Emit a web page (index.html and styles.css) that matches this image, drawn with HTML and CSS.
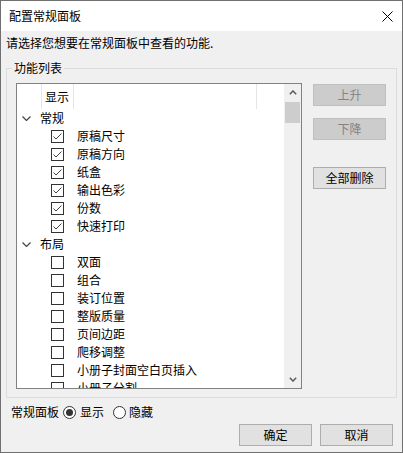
FILE: index.html
```html
<!DOCTYPE html>
<html lang="zh-CN">
<head>
    <meta charset="UTF-8">
    <title>配置常规面板</title>
    <link rel="stylesheet" href="styles.css">
</head>
<body>
<div class="window">
    <div class="titlebar">
        <span class="title">配置常规面板</span>
        <svg class="close" width="11" height="11" viewBox="0 0 11 11">
            <path d="M0.5 0.5 L10.5 10.5 M10.5 0.5 L0.5 10.5" stroke="#000" stroke-width="1" fill="none"/>
        </svg>
    </div>
    <div class="content">
        <p class="intro">请选择您想要在常规面板中查看的功能.</p>
        <fieldset class="group">
            <legend>功能列表</legend>
            <div class="group-body">
                <div class="list">
                    <div class="list-main">
                        <div class="list-header">
                            <span class="h-blank"></span>
                            <span class="h-show">显示</span>
                            <span class="h-fill"></span>
                            <span class="h-end"></span>
                        </div>

                        <div class="tree-row group-row">
                            <svg class="chevron" width="9" height="5" viewBox="0 0 9 5"><path d="M0.5 0.5 L4.5 4.5 L8.5 0.5" stroke="#444" stroke-width="1.2" fill="none"/></svg>
                            常规
                        </div>
                        <div class="tree-row item-row"><span class="cb checked"></span>原稿尺寸</div>
                        <div class="tree-row item-row"><span class="cb checked"></span>原稿方向</div>
                        <div class="tree-row item-row"><span class="cb checked"></span>纸盒</div>
                        <div class="tree-row item-row"><span class="cb checked"></span>输出色彩</div>
                        <div class="tree-row item-row"><span class="cb checked"></span>份数</div>
                        <div class="tree-row item-row"><span class="cb checked"></span>快速打印</div>

                        <div class="tree-row group-row">
                            <svg class="chevron" width="9" height="5" viewBox="0 0 9 5"><path d="M0.5 0.5 L4.5 4.5 L8.5 0.5" stroke="#444" stroke-width="1.2" fill="none"/></svg>
                            布局
                        </div>
                        <div class="tree-row item-row"><span class="cb"></span>双面</div>
                        <div class="tree-row item-row"><span class="cb"></span>组合</div>
                        <div class="tree-row item-row"><span class="cb"></span>装订位置</div>
                        <div class="tree-row item-row"><span class="cb"></span>整版质量</div>
                        <div class="tree-row item-row"><span class="cb"></span>页间边距</div>
                        <div class="tree-row item-row"><span class="cb"></span>爬移调整</div>
                        <div class="tree-row item-row"><span class="cb"></span>小册子封面空白页插入</div>
                        <div class="tree-row item-row"><span class="cb"></span>小册子分割</div>
                    </div>
                    <div class="scrollbar">
                        <div class="sb-btn">
                            <svg width="8" height="5" viewBox="0 0 8 5"><path d="M0.8 4.2 L4 1 L7.2 4.2" stroke="#606060" stroke-width="1.6" fill="none"/></svg>
                        </div>
                        <div class="sb-track"><div class="sb-thumb"></div></div>
                        <div class="sb-btn">
                            <svg width="8" height="5" viewBox="0 0 8 5"><path d="M0.8 0.8 L4 4 L7.2 0.8" stroke="#606060" stroke-width="1.6" fill="none"/></svg>
                        </div>
                    </div>
                </div>
                <div class="side-buttons">
                    <button class="btn disabled btn-up">上升</button>
                    <button class="btn disabled btn-down">下降</button>
                    <button class="btn btn-clear">全部删除</button>
                </div>
            </div>
        </fieldset>

        <div class="panel-row">
            <span class="panel-label">常规面板</span>
            <span class="radio selected"></span>
            <span class="radio-text">显示</span>
            <span class="radio"></span>
            <span class="radio-text last">隐藏</span>
        </div>

        <div class="footer">
            <button class="btn">确定</button>
            <button class="btn">取消</button>
        </div>
    </div>
</div>
</body>
</html>
```

FILE: styles.css
```css
body {
    margin: 0;
    font-family: "Noto Sans CJK SC", "Noto Sans", sans-serif;
    font-size: 12px;
    color: #000;
}
.window {
    width: 403px;
    height: 453px;
    box-sizing: border-box;
    border: 1px solid #707070;
    background-color: #f0f0f0;
    display: flex;
    flex-direction: column;
}
.titlebar {
    height: 30px;
    background-color: #fff;
    display: flex;
    align-items: center;
    justify-content: space-between;
    padding: 0 9px 0 8px;
}
.title {
    line-height: 16px;
}
.content {
    padding: 4px 5px 0 5px;
    display: flex;
    flex-direction: column;
}
.intro {
    margin: 0;
    line-height: 16px;
}
.group {
    margin: 9px 0 0 0;
    padding: 7px 9px 8px 9px;
    border: 1px solid #dcdcdc;
    min-width: 0;
}
.group legend {
    margin-left: -4px;
    padding: 0 2px;
    line-height: 16px;
}
.group-body {
    display: flex;
    align-items: flex-start;
    gap: 11px;
}
.list {
    width: 286px;
    height: 306px;
    box-sizing: border-box;
    border: 1px solid #828282;
    background-color: #fff;
    display: flex;
}
.list-main {
    flex: 1;
    overflow: hidden;
}
.list-header {
    height: 25px;
    display: flex;
}
.list-header span {
    box-sizing: border-box;
    border-right: 1px solid #e5e5e5;
    line-height: 25px;
}
.h-blank {
    width: 25px;
}
.h-show {
    width: 32px;
    padding-left: 3px;
}
.h-fill {
    width: 183px;
}
.list-header .h-end {
    flex: 1;
    border-right: none;
}
.tree-row {
    height: 18px;
    line-height: 18px;
    display: flex;
    align-items: center;
    white-space: nowrap;
}
.group-row {
    padding-left: 5px;
}
.chevron {
    margin-right: 9px;
}
.item-row {
    padding-left: 34px;
}
.cb {
    width: 13px;
    height: 13px;
    box-sizing: border-box;
    border: 1px solid #333;
    background-color: #fff;
    margin-right: 13px;
    flex-shrink: 0;
}
.cb.checked {
    background: #fff url("data:image/svg+xml;utf8,<svg xmlns='http://www.w3.org/2000/svg' width='11' height='11' viewBox='0 0 11 11'><path d='M1.5 5.5 L4 8 L9.5 2.5' stroke='%23444' stroke-width='1' fill='none'/></svg>") no-repeat center;
}
.scrollbar {
    width: 17px;
    background-color: #f0f0f0;
    display: flex;
    flex-direction: column;
}
.sb-btn {
    height: 17px;
    display: flex;
    align-items: center;
    justify-content: center;
}
.sb-track {
    flex: 1;
}
.sb-thumb {
    height: 21px;
    margin: 1px 1px 0 1px;
    background-color: #cdcdcd;
}
.side-buttons {
    display: flex;
    flex-direction: column;
}
.btn {
    width: 73px;
    height: 22px;
    box-sizing: border-box;
    border: 1px solid #adadad;
    background-color: #e1e1e1;
    font-family: inherit;
    font-size: 12px;
    color: #000;
    padding: 0;
    line-height: 20px;
}
.btn.disabled {
    background-color: #cccccc;
    border-color: #bfbfbf;
    color: #838383;
}
.btn-up {
    margin-top: 1px;
}
.btn-down {
    margin-top: 12px;
}
.btn-clear {
    margin-top: 27px;
}
.panel-row {
    margin: 6px 0 0 5px;
    display: flex;
    align-items: center;
    line-height: 16px;
}
.panel-label {
    margin-right: 4px;
}
.radio {
    width: 13px;
    height: 13px;
    box-sizing: border-box;
    border: 1px solid #333;
    border-radius: 50%;
    background-color: #fff;
    margin-right: 4px;
    display: flex;
    align-items: center;
    justify-content: center;
}
.radio.selected::after {
    content: "";
    width: 7px;
    height: 7px;
    border-radius: 50%;
    background-color: #333;
}
.radio-text {
    margin-right: 9px;
}
.radio + .radio-text.last {
    margin-left: -1px;
}
.footer {
    margin-top: 4px;
    padding-right: 4px;
    display: flex;
    justify-content: flex-end;
    gap: 8px;
}
```
